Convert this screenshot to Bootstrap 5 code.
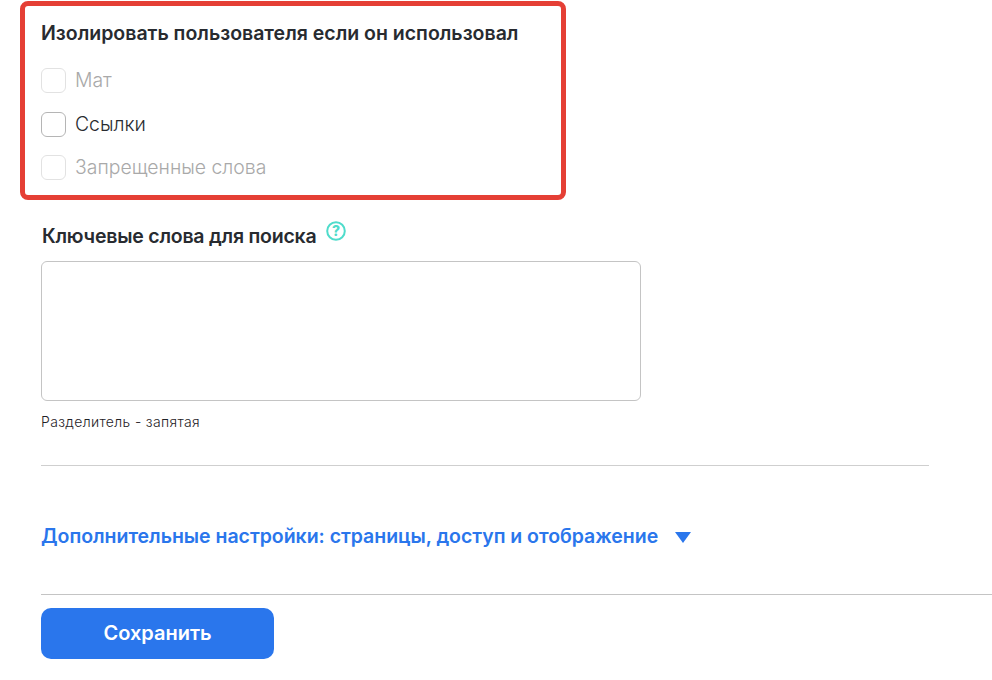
<!doctype html>
<html lang="ru"><head><meta charset="utf-8">
<link rel="stylesheet" href="https://cdn.jsdelivr.net/npm/bootstrap@5.3.0/dist/css/bootstrap.min.css">
<style>
html,body{height:680px;overflow:hidden}
body{font-family:Inter,"Noto Sans",sans-serif;color:#282b30;background:#fff}
.page-wrap{padding:1px 0 0 20px}
.red-box{width:546px;height:199px;border:5px solid #e53f35;border-radius:8px;padding:12px 0 0 16px}
.sec-title{font-size:19.5px;font-weight:600;line-height:30px;margin:0;display:block}
.kw-title{letter-spacing:-.22px;margin-left:1px}
.opt-list{margin-top:20px;gap:19px}
.opt-row{height:25px;gap:9px;font-size:19.4px;font-weight:300;line-height:25px}
.opt-row:last-child{margin-top:-1px}
.opt-box{width:25px;height:25px;margin:0;border:1px solid #b5b5b5;border-radius:6px;background:#fff;appearance:none;flex:none}
.opt-row.off{color:#a9a9a9}
.opt-row.off .opt-box{border-color:#e2e2e2}
.field-wrap{padding-left:41px}
.kw-label{margin-top:21px;height:30px;gap:10px}
.kw-hint{width:20px;height:20px;margin-top:-10px;flex:none}
.kw-area{display:block;width:600px;height:140px;margin-top:10px;border:1px solid #c4c4c4;border-radius:6px;resize:none;box-shadow:none}
.kw-note{font-size:14px;font-weight:300;line-height:20px;margin-top:11px;letter-spacing:.35px;color:#1f2227}
.rule-a{width:888px;margin:33px 0 0;border:0;border-top:1px solid #cfcfcf;opacity:1}
.more-link{margin-top:56px;height:30px;font-size:19.5px;font-weight:600;letter-spacing:-.03px;color:#2a76ec;text-decoration:none;gap:17px}
.rule-b{margin:42px 0 0;border:0;border-top:1px solid #c4c4c4;opacity:1}
.save-btn{width:233px;height:51px;margin-top:13px;padding:4px 12px 6px;background:#2a76ec;border:0;border-radius:10px;color:#fff;font-size:20px;font-weight:600}
</style></head>
<body>
<div class="page-wrap">
  <div class="red-box">
    <p class="sec-title">Изолировать пользователя если он использовал</p>
    <div class="opt-list d-flex flex-column">
      <label class="opt-row off d-flex align-items-center"><input class="opt-box" type="checkbox" disabled>Мат</label>
      <label class="opt-row d-flex align-items-center"><input class="opt-box" type="checkbox">Ссылки</label>
      <label class="opt-row off d-flex align-items-center"><input class="opt-box" type="checkbox" disabled>Запрещенные слова</label>
    </div>
  </div>
</div>
<div class="field-wrap">
  <div class="kw-label d-flex align-items-center">
    <span class="sec-title kw-title">Ключевые слова для поиска</span>
    <svg class="kw-hint" viewBox="0 0 20 20"><circle cx="10" cy="10" r="8.8" fill="#fff" stroke="#4fdccb" stroke-width="2"/><text x="10" y="15" text-anchor="middle" font-family="Inter,sans-serif" font-size="14" font-weight="800" fill="#4fdccb">?</text></svg>
  </div>
  <textarea class="kw-area form-control"></textarea>
  <div class="kw-note">Разделитель - запятая</div>
  <hr class="rule-a">
  <a class="more-link d-flex align-items-center" href="#">Дополнительные настройки: страницы, доступ и отображение
    <svg width="16" height="11" viewBox="0 0 16 11"><path d="M0 0H16L8 11Z" fill="#2a76ec"/></svg></a>
  <hr class="rule-b">
  <button class="save-btn btn" type="button">Сохранить</button>
</div>
</body></html>
